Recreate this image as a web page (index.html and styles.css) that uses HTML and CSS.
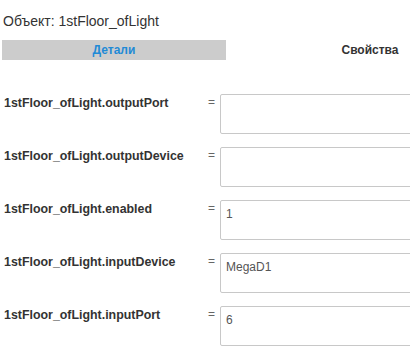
FILE: index.html
```html
<!DOCTYPE html>
<html>
<head>
<meta charset="utf-8">
<link rel="stylesheet" href="styles.css">
</head>
<body>
<div class="page">
  <div class="title">Объект: 1stFloor_ofLight</div>
  <div class="tabs">
    <div class="tab tab-active">Детали</div>
    <div class="tab">Свойства</div>
  </div>
  <div class="rows">
    <div class="row">
      <div class="label">1stFloor_ofLight.outputPort</div>
      <div class="eq">=</div>
      <textarea class="value"></textarea>
    </div>
    <div class="row">
      <div class="label">1stFloor_ofLight.outputDevice</div>
      <div class="eq">=</div>
      <textarea class="value"></textarea>
    </div>
    <div class="row">
      <div class="label">1stFloor_ofLight.enabled</div>
      <div class="eq">=</div>
      <textarea class="value">1</textarea>
    </div>
    <div class="row">
      <div class="label">1stFloor_ofLight.inputDevice</div>
      <div class="eq">=</div>
      <textarea class="value">MegaD1</textarea>
    </div>
    <div class="row">
      <div class="label">1stFloor_ofLight.inputPort</div>
      <div class="eq">=</div>
      <textarea class="value">6</textarea>
    </div>
  </div>
</div>
</body>
</html>
```

FILE: styles.css
```css
html, body {
  margin: 0;
  padding: 0;
  background: #fff;
  overflow: hidden;
}
.page {
  width: 410px;
  height: 362px;
  overflow: hidden;
  font-family: "Liberation Sans", Arial, sans-serif;
  color: #333;
}
.title {
  font-size: 14px;
  line-height: 16px;
  padding: 13px 0 0 3px;
  height: 16px;
}
.tabs {
  display: flex;
  margin-top: 11px;
  padding-left: 2px;
}
.tab {
  flex: none;
  height: 20px;
  line-height: 20px;
  font-size: 12px;
  font-weight: bold;
  text-align: center;
  color: #333;
  width: 288px;
}
.tab-active {
  width: 224px;
  background: #cccccc;
  color: #1f8ad6;
}
.rows {
  display: flex;
  flex-direction: column;
  gap: 13px;
  margin-top: 34px;
}
.row {
  display: flex;
  align-items: flex-start;
}
.label {
  flex: none;
  width: 200px;
  padding: 2px 0 0 4px;
  font-size: 12.4px;
  line-height: 14px;
  font-weight: bold;
  color: #333;
}
.eq {
  flex: none;
  width: 12px;
  padding: 1px 0 0 4px;
  font-size: 12px;
  line-height: 14px;
  color: #666;
}
.value {
  flex: none;
  box-sizing: border-box;
  width: 200px;
  height: 40px;
  margin: 0;
  padding: 6px 5px;
  border: 1px solid #c8c8c8;
  border-radius: 2px;
  font-family: "Liberation Sans", Arial, sans-serif;
  font-size: 12px;
  line-height: 15px;
  color: #555;
  resize: none;
  background: #fff;
}
```
